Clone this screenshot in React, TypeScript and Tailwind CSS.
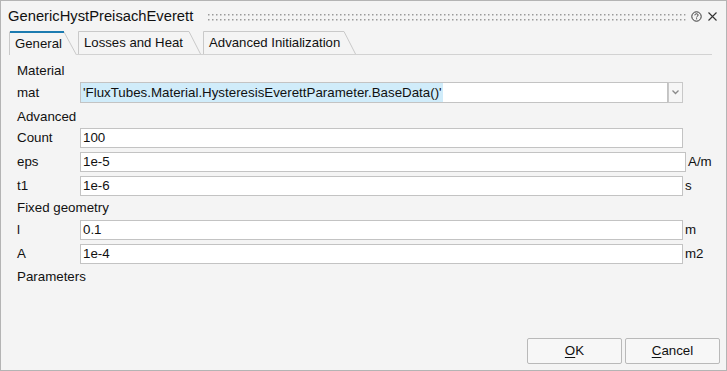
import React from "react";

const font = { fontFamily: '"Liberation Sans", Arial, sans-serif' };

function Tab({ label, width, selected }: { label: string; width: number; selected?: boolean }) {
  const h = 24;
  return (
    <div className="relative shrink-0 h-[24px]" style={{ width }}>
      <svg className="absolute inset-0" width={width} height={h} viewBox={`0 0 ${width} ${h}`}>
        {selected ? (
          <>
            <path d={`M0.5 ${h} V1 H${width - 13} L${width - 0.5} ${h}`} fill="#f4f4f4" stroke="#c9c9c9" strokeWidth="1" />
            <rect x="1" y="0" width={width - 14} height="2" fill="#1c7bb0" />
          </>
        ) : (
          <path d={`M0.5 ${h} V1.5 H${width - 12} L${width - 0.5} ${h}`} fill="#f4f4f4" stroke="#c9c9c9" strokeWidth="1" />
        )}
      </svg>
      <div className="relative h-full flex items-center pl-[6px] pt-[1px] text-[13.2px] text-[#111]">{label}</div>
    </div>
  );
}

function Field({ value, w = 603 }: { value: string; w?: number }) {
  return (
    <div
      className="h-[20px] border border-[#c3c3c3] bg-white flex items-center pl-[2px] text-[13.33px] text-[#111]"
      style={{ width: w }}
    >
      {value}
    </div>
  );
}

function Row({ label, value, unit, w, mt }: { label: string; value: string; unit?: string; w?: number; mt: string }) {
  return (
    <div className={`flex items-center ${mt}`}>
      <div className="w-[63px] text-[13.33px] text-[#111]">{label}</div>
      <Field value={value} w={w} />
      {unit && <div className="ml-[2px] text-[13.33px] text-[#111]">{unit}</div>}
    </div>
  );
}

export default function App() {
  return (
    <div style={font} className="w-[727px] h-[371px] border border-[#b4b4b4] bg-[#f4f4f4] flex flex-col overflow-hidden">
      {/* Title bar */}
      <div className="h-[30px] flex items-center pl-[7px] shrink-0">
        <div className="text-[14.75px] text-[#111] pt-[1px]">GenericHystPreisachEverett</div>
        <svg className="ml-[15px] flex-1 mt-[2px]" height="7">
          <defs>
            <pattern id="grip" width="4" height="5" patternUnits="userSpaceOnUse">
              <rect x="0" y="0" width="1.5" height="1.5" fill="#9a9a9a" />
            </pattern>
          </defs>
          <rect x="0" y="0" width="100%" height="7" fill="url(#grip)" />
        </svg>
        <svg className="ml-[5px] mt-[1px]" width="11" height="11" viewBox="0 0 11 11">
          <circle cx="5.5" cy="5.5" r="4.7" fill="none" stroke="#333" strokeWidth="1" />
          <path d="M3.9 4.3 C3.9 3.3 4.6 2.8 5.5 2.8 C6.4 2.8 7.1 3.3 7.1 4.2 C7.1 5.2 5.6 5.3 5.6 6.4" fill="none" stroke="#333" strokeWidth="1" />
          <rect x="5.1" y="7.3" width="1" height="1" fill="#333" />
        </svg>
        <svg className="ml-[6px] mt-[1px] mr-[9px]" width="9" height="9" viewBox="0 0 9 9">
          <path d="M0.5 0.5 L8.5 8.5 M8.5 0.5 L0.5 8.5" stroke="#333" strokeWidth="1.1" />
        </svg>
      </div>

      {/* Tabs */}
      <div className="flex items-end h-[24px] shrink-0">
        <div className="w-[8px]" />
        <Tab label="General" width={68} selected />
        <div className="flex items-end w-[635px] border-b border-[#d2d2d2] h-[24px]">
          <div className="w-[1px]" />
          <Tab label="Losses and Heat" width={123} />
          <div className="w-[2px]" />
          <Tab label="Advanced Initialization" width={153} />
        </div>
      </div>

      {/* Content */}
      <div className="pl-[16px] pt-[4px] flex flex-col">
        <div className="h-[23px] flex items-center text-[13.33px] text-[#111]">Material</div>
        <div className="flex items-center mb-[3px]">
          <div className="w-[63px] text-[13.33px] text-[#111]">mat</div>
          <div className="w-[588px] h-[21px] border border-[#c3c3c3] bg-white flex items-stretch">
            <span className="bg-[#d0ecfa] flex items-center pl-[2px] pr-[1px] text-[13.33px] text-[#111]">
              'FluxTubes.Material.HysteresisEverettParameter.BaseData()'
            </span>
          </div>
          <div className="w-[15px] h-[21px] border border-[#c8c8c8] bg-[#f6f6f6] flex items-center justify-center">
            <svg width="7" height="5" viewBox="0 0 7 5">
              <path d="M0.5 0.5 L3.5 3.5 L6.5 0.5" fill="none" stroke="#8a8a8a" strokeWidth="1.3" />
            </svg>
          </div>
        </div>
        <div className="h-[21px] flex items-center text-[13.33px] text-[#111]">Advanced</div>
        <Row label="Count" value="100" mt="mt-[1px]" />
        <Row label="eps" value="1e-5" unit="A/m" w={606} mt="mt-[4px]" />
        <Row label="t1" value="1e-6" unit="s" mt="mt-[4px]" />
        <div className="h-[24px] flex items-center text-[13.33px] text-[#111]">Fixed geometry</div>
        <Row label="l" value="0.1" unit="m" mt="mt-0" />
        <Row label="A" value="1e-4" unit="m2" mt="mt-[4px]" />
        <div className="h-[25px] flex items-center text-[13.33px] text-[#111]">Parameters</div>
      </div>

      {/* Buttons */}
      <div className="mt-auto flex justify-end gap-[3px] pr-[6px] pb-[6px]">
        <button className="w-[95px] h-[26px] border border-[#b9b9b9] rounded-[2px] bg-[#f7f7f7] text-[13.33px] text-[#111]">
          <span className="underline underline-offset-2">O</span>K
        </button>
        <button className="w-[95px] h-[26px] border border-[#b9b9b9] rounded-[2px] bg-[#f7f7f7] text-[13.33px] text-[#111]">
          <span className="underline underline-offset-2">C</span>ancel
        </button>
      </div>
    </div>
  );
}
